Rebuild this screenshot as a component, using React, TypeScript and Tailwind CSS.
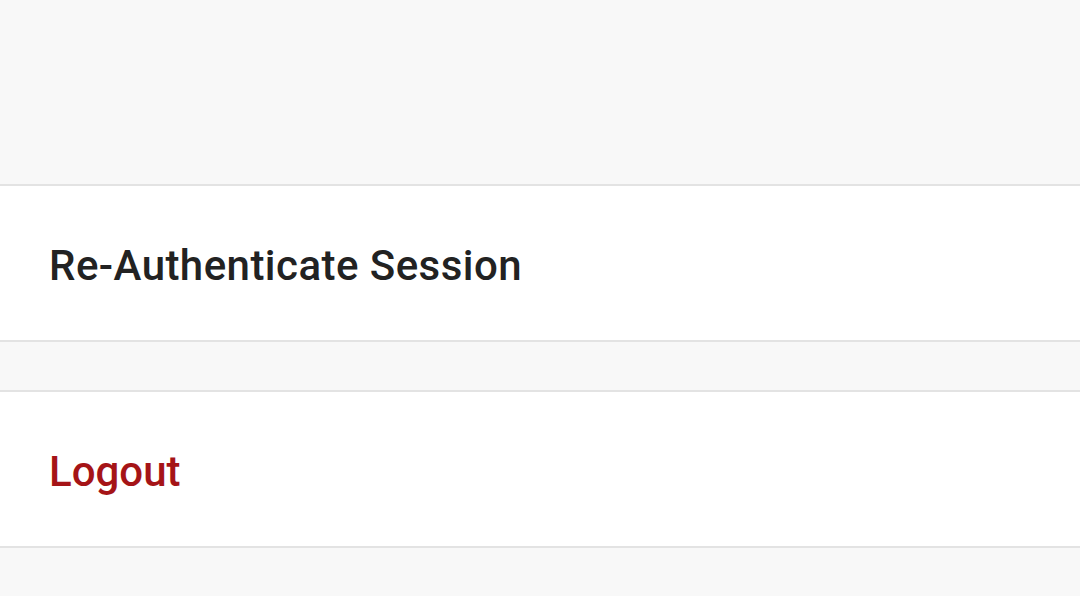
export default function App() {
  return (
    <div className="min-h-[596px] bg-[#f8f8f8] font-['Roboto',sans-serif]">
      <div className="h-[184px]" />
      <div className="border-y-2 border-[#e3e3e3] bg-white">
        <button className="flex h-[154px] w-full items-center px-[49px] pt-1 text-left text-[42px] font-medium tracking-[0.45px] text-[#222222]">
          Re-Authenticate Session
        </button>
      </div>
      <div className="h-[48px]" />
      <div className="border-y-2 border-[#e3e3e3] bg-white">
        <button className="flex h-[154px] w-full items-center px-[49px] pt-1 text-left text-[42px] font-medium text-[#a51417]">
          Logout
        </button>
      </div>
    </div>
  );
}
